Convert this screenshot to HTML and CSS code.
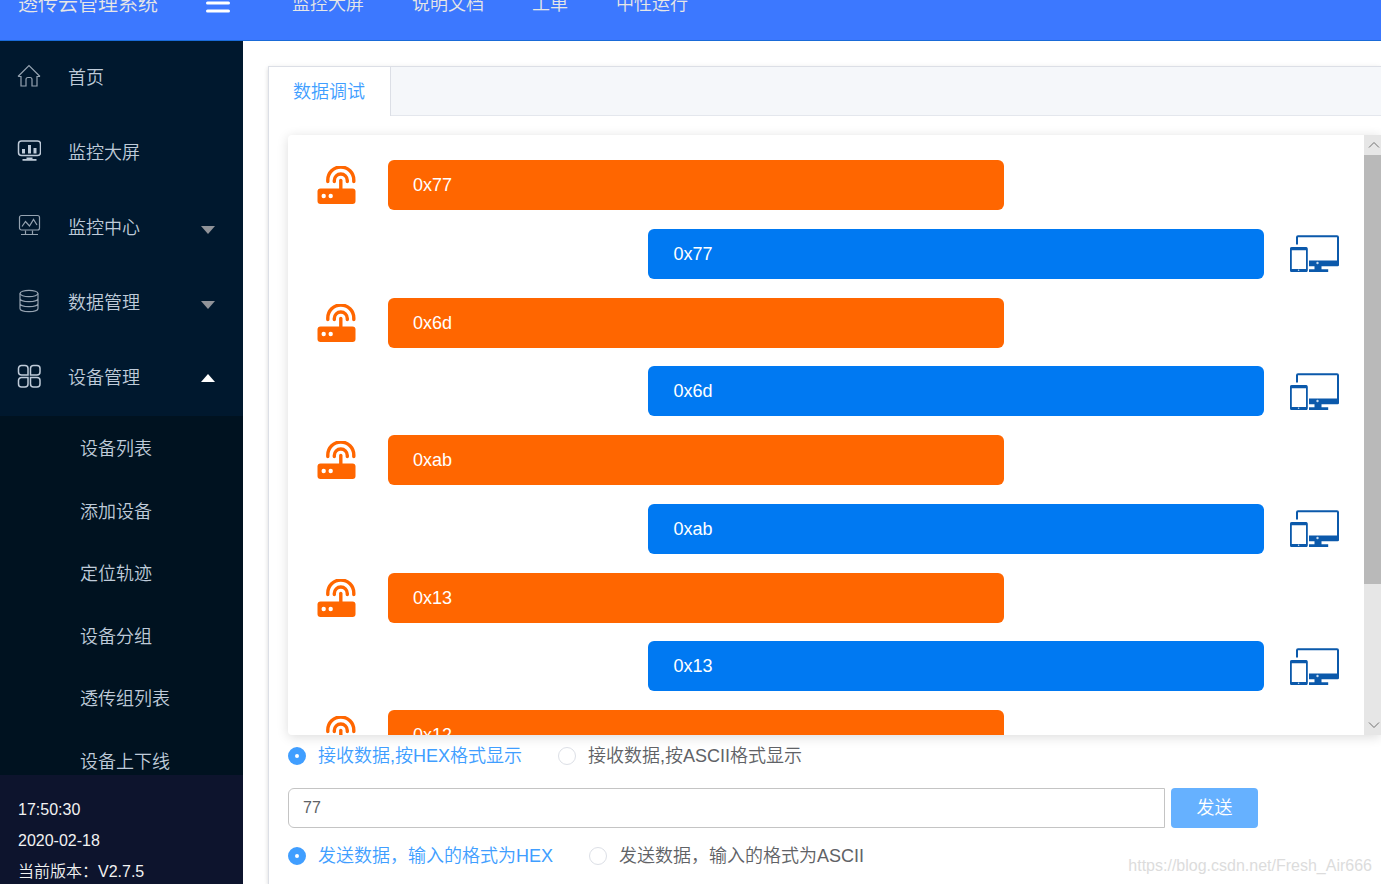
FILE: index.html
```html
<!DOCTYPE html>
<html lang="zh-CN">
<head>
<meta charset="utf-8">
<title>透传云管理系统</title>
<link rel="stylesheet" href="styles.css">
</head>
<body>
<svg class="defs" width="0" height="0" aria-hidden="true">
  <symbol id="router" viewBox="0 0 39 38">
    <rect x="0.5" y="22.5" width="38" height="15.5" rx="3" fill="#ff6600"/>
    <circle cx="6.7" cy="30" r="2.2" fill="#fff"/>
    <circle cx="13.7" cy="30" r="2.2" fill="#fff"/>
    <g fill="none" stroke="#ff6600" stroke-width="3.4" stroke-linecap="round">
      <path d="M10.8 15.500v-1.500a12.500 12.500 0 0 1 26 0v1.500"/>
      <path d="M17.300 15.500v-1a6.500 6.500 0 0 1 13 0v1"/>
      <path d="M23.800 14.500v9"/>
    </g>
  </symbol>
  <symbol id="devices" viewBox="0 0 49 37">
    <path d="M7 9.500V2.200a1 1 0 0 1 1-1h39a1 1 0 0 1 1 1v24" fill="none" stroke="#0b59ab" stroke-width="2"/>
    <path d="M19 25.500h30V30a1.300 1.300 0 0 1-1.300 1.300H19zM24.500 31h7v3.300h6.700V37H19v-2.700h5.500z" fill="#0b59ab"/>
    <circle cx="27.500" cy="28" r="1.200" fill="#c9dcf0"/>
    <rect x="0.900" y="12.800" width="16" height="23.400" rx="1" fill="#fff" stroke="#0b59ab" stroke-width="1.800"/>
    <path d="M0.500 12.500h16.500v2.700H0.500zM0.500 34h16.500v2.500H0.500z" fill="#0b59ab"/>
    <circle cx="8.600" cy="35.200" r="0.800" fill="#c9dcf0"/>
  </symbol>
</svg>

<header class="header">
  <div class="header-inner">
    <h1 class="brand">透传云管理系统</h1>
    <button class="toggle" aria-label="折叠菜单">
      <svg width="24" height="20" viewBox="0 0 24 20" fill="none" stroke="#fff" stroke-width="3" stroke-linecap="round"><path d="M1.500 2h21M1.500 10h21M1.500 18h21"/></svg>
    </button>
    <nav class="topnav">
      <a href="#">监控大屏</a>
      <a href="#">说明文档</a>
      <a href="#">工单</a>
      <a href="#">中性运行</a>
    </nav>
  </div>
</header>

<div class="layout">
  <aside class="sidebar">
    <nav class="menu">
      <a class="item" href="#">
        <svg class="item-icon dim" viewBox="0 0 24 24"><path d="M1 12.500L12 1.500l11 11M1 12.500h3V22h5v-6.500a2 2 0 0 1 2-2h2a2 2 0 0 1 2 2V22h5v-9.500h3"/></svg>
        <span>首页</span>
      </a>
      <a class="item" href="#">
        <svg class="item-icon" viewBox="0 0 24 24"><rect x="1.500" y="2" width="22" height="14.500" rx="3"/><path class="solid" d="M5 10h3v4.500H5zM11 6h3v8.500h-3zM16.500 9h3v5.500h-3zM9.500 18.500h6V20h4v1.700h-14V20h4z"/></svg>
        <span>监控大屏</span>
      </a>
      <a class="item" href="#">
        <svg class="item-icon dim" viewBox="0 0 24 24"><rect x="2.500" y="1.500" width="20" height="14.500" rx="2"/><path d="M5 12.500l3.500-5 4 4.500 4-6.500 3.500 5.500M8.500 16.500v3.500M15.500 16.500v3.500M4 20.500h17"/></svg>
        <span>监控中心</span>
        <i class="arrow"></i>
      </a>
      <a class="item" href="#">
        <svg class="item-icon dim" viewBox="0 0 24 24"><ellipse cx="12" cy="4.500" rx="9" ry="3.200"/><path d="M3 4.500v15c0 1.800 4 3.200 9 3.200s9-1.400 9-3.200v-15M3 9.500c0 1.800 4 3.200 9 3.200s9-1.400 9-3.200M3 14.500c0 1.800 4 3.200 9 3.200s9-1.400 9-3.200"/></svg>
        <span>数据管理</span>
        <i class="arrow"></i>
      </a>
      <a class="item" href="#">
        <svg class="item-icon" viewBox="0 0 24 24"><path d="M4.500 1.500h3.500a3 3 0 0 1 3 3V11H4.500a3 3 0 0 1-3-3V4.500a3 3 0 0 1 3-3zM16.500 1.500H20a3 3 0 0 1 3 3V8a3 3 0 0 1-3 3h-6.500V4.500a3 3 0 0 1 3-3zM4.500 13.500H11V20a3 3 0 0 1-3 3H4.500a3 3 0 0 1-3-3v-3.500a3 3 0 0 1 3-3zM13.500 13.500H20a3 3 0 0 1 3 3V20a3 3 0 0 1-3 3h-3.500a3 3 0 0 1-3-3z"/></svg>
        <span>设备管理</span>
        <i class="arrow up"></i>
      </a>
      <div class="submenu">
        <a href="#">设备列表</a>
        <a href="#">添加设备</a>
        <a href="#">定位轨迹</a>
        <a href="#">设备分组</a>
        <a href="#">透传组列表</a>
        <a href="#">设备上下线</a>
      </div>
    </nav>
    <div class="status">
      <div>17:50:30</div>
      <div>2020-02-18</div>
      <div>当前版本：V2.7.5</div>
    </div>
  </aside>

  <main class="main">
    <section class="card">
      <div class="tabs" role="tablist">
        <button class="tab" role="tab" aria-selected="true">数据调试</button>
      </div>
      <div class="card-body">
        <div class="chat">
          <div class="messages">
            <div class="msg in"><svg class="router"><use href="#router"/></svg><p>0x77</p></div>
            <div class="msg out"><p>0x77</p><svg class="devices"><use href="#devices"/></svg></div>
            <div class="msg in"><svg class="router"><use href="#router"/></svg><p>0x6d</p></div>
            <div class="msg out"><p>0x6d</p><svg class="devices"><use href="#devices"/></svg></div>
            <div class="msg in"><svg class="router"><use href="#router"/></svg><p>0xab</p></div>
            <div class="msg out"><p>0xab</p><svg class="devices"><use href="#devices"/></svg></div>
            <div class="msg in"><svg class="router"><use href="#router"/></svg><p>0x13</p></div>
            <div class="msg out"><p>0x13</p><svg class="devices"><use href="#devices"/></svg></div>
            <div class="msg in"><svg class="router"><use href="#router"/></svg><p>0x12</p></div>
          </div>
          <div class="scrollbar">
            <button aria-label="向上滚动"><svg width="12" height="8" viewBox="0 0 12 8"><path d="M1 6.500l5-5 5 5"/></svg></button>
            <div class="track"><div class="thumb"></div></div>
            <button aria-label="向下滚动"><svg width="12" height="8" viewBox="0 0 12 8"><path d="M1 1.500l5 5 5-5"/></svg></button>
          </div>
        </div>
        <form class="send-form">
          <div class="radios">
            <label><input type="radio" name="recv" checked><span>接收数据,按HEX格式显示</span></label>
            <label><input type="radio" name="recv"><span>接收数据,按ASCII格式显示</span></label>
          </div>
          <div class="send-row">
            <input class="text" type="text" value="77" aria-label="发送内容">
            <button class="send" type="button">发送</button>
          </div>
          <div class="radios">
            <label><input type="radio" name="send" checked><span>发送数据，输入的格式为HEX</span></label>
            <label><input type="radio" name="send"><span>发送数据，输入的格式为ASCII</span></label>
          </div>
        </form>
      </div>
    </section>
  </main>
</div>
<div class="watermark">https://blog.csdn.net/Fresh_Air666</div>
</body>
</html>
```

FILE: styles.css
```css
* {
  box-sizing: border-box;
}

body {
  margin: 0;
  height: 100vh;
  display: flex;
  flex-direction: column;
  overflow: hidden;
  background: #fff;
  color: #606266;
  font: 350 18px/24px "Liberation Sans", "Noto Sans CJK SC", sans-serif;
}

a {
  color: inherit;
  text-decoration: none;
}

button {
  padding: 0;
  border: 0;
  background: none;
  font: inherit;
  color: inherit;
}

.defs {
  position: absolute;
}

/* Header, scrolled partly out of view */
.header {
  flex: none;
  height: 41px;
  overflow: hidden;
  background: #3c78ff;
  border-bottom: 1px solid #1a6bd8;
  color: #e6e6e6;
}

.header-inner {
  height: 75px;
  margin-top: -34px;
  display: flex;
  align-items: center;
}

.brand {
  width: 206px;
  margin: 0;
  padding-left: 18px;
  font-size: 20px;
  font-weight: 350;
}

.toggle {
  display: flex;
  margin-bottom: 2px;
}

.topnav {
  display: flex;
  gap: 48px;
  margin-left: 62px;
}

.layout {
  flex: 1;
  min-height: 0;
  display: flex;
}

/* Sidebar */
.sidebar {
  flex: none;
  width: 243px;
  display: flex;
  flex-direction: column;
  background: #00182e;
  color: #bfcbd9;
}

.menu {
  flex: 1;
  min-height: 0;
  overflow: hidden;
}

.item {
  height: 75px;
  padding: 0 28px 2px 17px;
  display: flex;
  align-items: center;
}

.item-icon {
  width: 24px;
  height: 24px;
  margin-right: 27px;
  margin-bottom: 3px;
  fill: none;
  stroke: #bfcbd9;
  stroke-width: 1.5;
}

.item-icon.dim {
  stroke: #95a3b1;
  stroke-width: 1.2;
}

.item-icon .solid {
  fill: #bfcbd9;
  stroke: none;
}

.arrow {
  margin-left: auto;
  margin-top: 5px;
  border: 7px solid transparent;
  border-top: 8px solid #909399;
  border-bottom: 0;
}

.arrow.up {
  margin-top: 1px;
  border-top: 0;
  border-bottom: 8px solid #fff;
}

.submenu {
  height: 377px;
  padding-top: 2px;
  display: flex;
  flex-direction: column;
  background: #001220;
}

.submenu a {
  flex: 1;
  padding-left: 80px;
  display: flex;
  align-items: center;
}

.status {
  flex: none;
  height: 109px;
  padding: 19px 18px 0;
  overflow: hidden;
  background: #0d142d;
  color: #f2f2f2;
  font-size: 16px;
  line-height: 31px;
}

/* Content */
.main {
  flex: 1;
  min-width: 0;
  padding: 25px 0 0 25px;
  overflow: hidden;
}

.card {
  height: 100%;
  border: 1px solid #dcdfe6;
  border-width: 1px 0 0 1px;
  box-shadow: 0 2px 4px rgba(0, 0, 0, 0.12), 0 0 6px rgba(0, 0, 0, 0.04);
}

.tabs {
  height: 49px;
  display: flex;
  background: #f5f7fa;
  border-bottom: 1px solid #e4e7ed;
}

.tab {
  height: 49px;
  padding: 0 25px 0 24px;
  background: #fff;
  border-right: 1px solid #dcdfe6;
  color: #409eff;
}

.card-body {
  padding: 19px 0 0 19px;
}

.chat {
  height: 600px;
  display: flex;
  overflow: hidden;
  border-radius: 4px 0 0 4px;
  background: #fff;
  box-shadow: 0 2px 12px rgba(0, 0, 0, 0.14);
}

.messages {
  flex: 1;
  height: 600px;
  margin-top: 25px;
  padding: 0 25px;
  display: flex;
  flex-direction: column;
  justify-content: space-between;
}

.msg {
  height: 50px;
  display: flex;
  align-items: center;
}

.msg p {
  width: 60%;
  margin: 0;
  padding: 13px 25px;
  border-radius: 6px;
  color: #fff;
}

.in p {
  background: #ff6600;
}

.out {
  justify-content: flex-end;
}

.out p {
  background: #0079f2;
}

.router {
  width: 39px;
  height: 38px;
  margin: 0 32px 0 4px;
}

.devices {
  width: 49px;
  height: 37px;
  margin-left: 26px;
}

.scrollbar {
  width: 17px;
  display: flex;
  flex-direction: column;
  background: #e6e6e6;
}

.scrollbar button {
  height: 20px;
  display: flex;
  align-items: center;
  justify-content: center;
}

.scrollbar svg {
  margin-left: 3px;
  fill: none;
  stroke: #707070;
}

.track {
  flex: 1;
}

.thumb {
  height: 429px;
  background: #b9b9b9;
}

/* Send form */
.radios {
  height: 42px;
  display: flex;
  align-items: center;
  gap: 36px;
}

.radios label {
  display: flex;
  align-items: center;
  gap: 12px;
}

.radios input {
  appearance: none;
  width: 18px;
  height: 18px;
  margin: 0;
  border: 1px solid #dcdfe6;
  border-radius: 50%;
  background: #fff;
}

.radios input:checked {
  border: 7px solid #409eff;
}

.radios input:checked + span {
  color: #409eff;
}

.send-row {
  display: flex;
  gap: 6px;
  margin: 11px 0 7px;
  padding-right: 123px;
}

.text {
  flex: 1;
  min-width: 0;
  height: 40px;
  padding: 0 14px;
  border: 1px solid #c4c4c4;
  border-radius: 6px 0 0 6px;
  background: #fff;
  color: #606266;
  font: 16px "Liberation Sans", sans-serif;
}

.send {
  width: 87px;
  height: 40px;
  border-radius: 4px;
  background: #66b1ff;
  color: #fff;
}

.watermark {
  position: absolute;
  right: 9px;
  bottom: 6px;
  color: #dcdcdc;
  font-size: 16px;
}
```
